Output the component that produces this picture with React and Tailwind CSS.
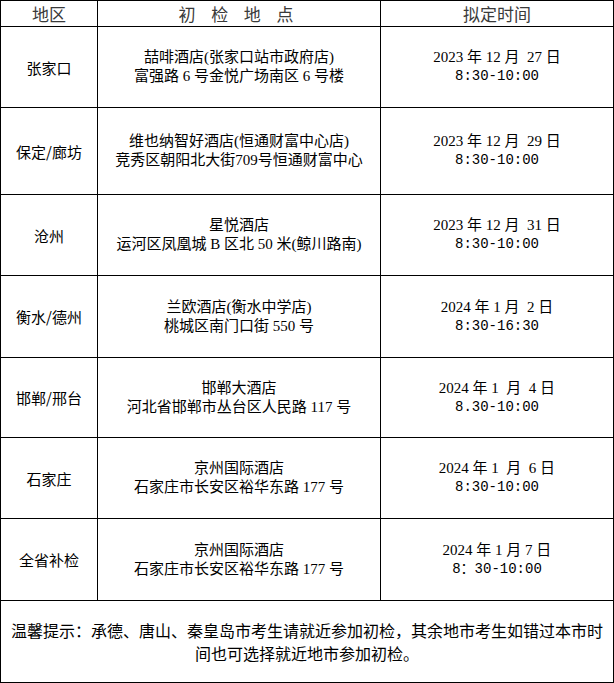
import React from 'react'

const CJK = '"Noto Sans CJK SC", sans-serif'
const SERIF = '"Liberation Serif", "Noto Sans CJK SC", serif'
const MONO = '"Liberation Mono", "Noto Sans CJK SC", monospace'

const ROWS = [
  {
    area: '张家口',
    place: '喆啡酒店(张家口站市政府店)',
    addr: '富强路 6 号金悦广场南区 6 号楼',
    date: '2023 年 12 月  27 日',
    time: '8:30-10:00',
    h: 'h-[81px]',
  },
  {
    area: '保定/廊坊',
    place: '维也纳智好酒店(恒通财富中心店)',
    addr: '竞秀区朝阳北大街709号恒通财富中心',
    date: '2023 年 12 月  29 日',
    time: '8:30-10:00',
    h: 'h-[87px]',
  },
  {
    area: '沧州',
    place: '星悦酒店',
    addr: '运河区凤凰城 B 区北 50 米(鲸川路南)',
    date: '2023 年 12 月  31 日',
    time: '8:30-10:00',
    h: 'h-[81px]',
  },
  {
    area: '衡水/德州',
    place: '兰欧酒店(衡水中学店)',
    addr: '桃城区南门口街 550 号',
    date: '2024 年 1 月  2 日',
    time: '8:30-16:30',
    h: 'h-[82px]',
  },
  {
    area: '邯郸/邢台',
    place: '邯郸大酒店',
    addr: '河北省邯郸市丛台区人民路 117 号',
    date: '2024 年 1  月  4 日',
    time: '8.30-10:00',
    h: 'h-[80px]',
  },
  {
    area: '石家庄',
    place: '京州国际酒店',
    addr: '石家庄市长安区裕华东路 177 号',
    date: '2024 年 1  月  6 日',
    time: '8:30-10:00',
    h: 'h-[81px]',
  },
  {
    area: '全省补检',
    place: '京州国际酒店',
    addr: '石家庄市长安区裕华东路 177 号',
    date: '2024 年 1 月 7 日',
    time: '8：30-10:00',
    h: 'h-[82px]',
  },
]

export default function App() {
  return (
    <div className="w-[614px] h-[683px] bg-white text-black" style={{ fontFamily: CJK }}>
      <table className="w-[613px] table-fixed border-collapse border border-black">
        <colgroup>
          <col className="w-[97px]" />
          <col className="w-[283px]" />
          <col className="w-[233px]" />
        </colgroup>
        <thead>
          {/* header row */}
          <tr className="h-[26px] text-[17px] leading-[22px] text-[#3a3a3a]">
            <th className="border border-black font-normal">地区</th>
            <th className="border border-black font-normal tracking-[0.35em]">初 检 地 点</th>
            <th className="border border-black font-normal">拟定时间</th>
          </tr>
        </thead>
        <tbody className="text-[15px] leading-[19px]">
          {ROWS.map((r) => (
            <tr key={r.area} className={r.h}>
              <td className="border border-black text-center align-middle">{r.area}</td>
              <td className="border border-black text-center align-middle" style={{ fontFamily: SERIF }}>
                <div>{r.place}</div>
                <div>{r.addr}</div>
              </td>
              <td className="border border-black text-center align-middle">
                <div className="whitespace-pre" style={{ fontFamily: SERIF }}>{r.date}</div>
                <div className="text-[14px]" style={{ fontFamily: MONO }}>{r.time}</div>
              </td>
            </tr>
          ))}
          {/* note */}
          <tr className="h-[82px]">
            <td colSpan={3} className="border border-black px-[4px] text-center align-middle text-[16px] leading-[23px]">
              <div className="whitespace-nowrap">温馨提示：承德、唐山、秦皇岛市考生请就近参加初检，其余地市考生如错过本市时</div>
              <div>间也可选择就近地市参加初检。</div>
            </td>
          </tr>
        </tbody>
      </table>
    </div>
  )
}
